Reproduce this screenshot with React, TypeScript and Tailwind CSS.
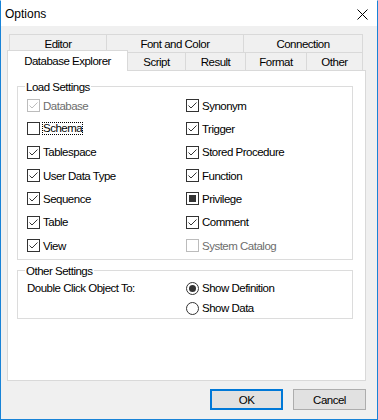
import React from "react";

type CState = "checked" | "unchecked" | "mixed";

function CheckBox({
  label,
  state,
  disabled,
  focus,
}: {
  label: string;
  state: CState;
  disabled?: boolean;
  focus?: boolean;
}) {
  const boxBorder = disabled ? "border-[#bcbcbc]" : "border-[#333333]";
  return (
    <div className="flex items-center">
      <span
        className={`w-[13px] h-[13px] shrink-0 border ${boxBorder} bg-white flex items-center justify-center`}
      >
        {state === "checked" && (
          <svg width="11" height="11" viewBox="0 0 11 11" className="block">
            <polyline
              points="1.5,5.5 4,8 9.5,2.5"
              fill="none"
              stroke={disabled ? "#bcbcbc" : "#333333"}
              strokeWidth="1"
            />
          </svg>
        )}
        {state === "mixed" && <span className="w-[7px] h-[7px] bg-[#333333]" />}
      </span>
      {focus ? (
        <span className="ml-[2px] border border-dotted border-black leading-[11px]">{label}</span>
      ) : (
        <span className={`ml-[3px] leading-[14px] ${disabled ? "text-[#6d6d6d]" : "text-black"}`}>
          {label}
        </span>
      )}
    </div>
  );
}

function Radio({ label, checked }: { label: string; checked?: boolean }) {
  return (
    <div className="flex items-center h-[20px]">
      <span className="w-[13px] h-[13px] shrink-0 rounded-full border border-[#333333] bg-white flex items-center justify-center">
        {checked && <span className="w-[7px] h-[7px] rounded-full bg-[#333333]" />}
      </span>
      <span className="ml-[3px] leading-[14px]">{label}</span>
    </div>
  );
}

export default function App() {
  return (
    <div className="w-[378px] h-[420px] border border-[#1883d7] border-t-white bg-[#f0f0f0] flex flex-col text-black text-[11.5px] tracking-[-0.5px] font-['Liberation_Sans',Arial,sans-serif]">
      {/* Title bar */}
      <div className="h-[25px] shrink-0 bg-white flex items-center justify-between pl-[4px] pr-[9px]">
        <span className="text-[12px] tracking-normal">Options</span>
        <svg width="11" height="11" viewBox="0 0 11 11" className="block mt-[2px]">
          <line x1="0.5" y1="0.5" x2="10.5" y2="10.5" stroke="#000" strokeWidth="1" />
          <line x1="10.5" y1="0.5" x2="0.5" y2="10.5" stroke="#000" strokeWidth="1" />
        </svg>
      </div>

      <div className="pt-[8px] pl-[6px]">
        {/* Tab row 1 */}
        <div className="flex ml-[2px] h-[18px]">
          <div className="w-[97px] h-[18px] border-t border-l border-[#d9d9d9] flex items-center justify-center leading-[14px]">
            Editor
          </div>
          <div className="w-[137px] h-[18px] border-t border-l border-[#d9d9d9] flex items-center justify-center leading-[14px]">
            Font and Color
          </div>
          <div className="w-[120px] h-[18px] border-t border-l border-r border-[#d9d9d9] flex items-center justify-center leading-[14px]">
            Connection
          </div>
        </div>
        {/* Tab row 2 */}
        <div className="flex items-end h-[20px] -mt-[2px] relative">
          <div className="w-[121px] h-[21px] -mb-[1px] bg-white border border-b-0 border-[#d9d9d9] relative z-10 flex items-center justify-center leading-[14px]">
            Database Explorer
          </div>
          <div className="w-[57px] h-[18px] border-t border-[#d9d9d9] flex items-center justify-center leading-[14px]">
            Script
          </div>
          <div className="w-[60px] h-[18px] border-t border-l border-[#d9d9d9] flex items-center justify-center leading-[14px]">
            Result
          </div>
          <div className="w-[61px] h-[18px] border-t border-l border-[#d9d9d9] flex items-center justify-center leading-[14px]">
            Format
          </div>
          <div className="w-[57px] h-[18px] border-t border-l border-r border-[#d9d9d9] flex items-center justify-center leading-[14px]">
            Other
          </div>
        </div>

        {/* Panel */}
        <div className="w-[359px] h-[311px] bg-white border border-[#d9d9d9] flex flex-col">
          {/* Load Settings */}
          <div className="ml-[9px] mt-[15px] w-[336px] border border-[#dcdcdc] flex flex-col pb-[2px]">
            <span className="-mt-[7px] ml-[7px] px-[1px] bg-white self-start leading-[14px]">
              Load Settings
            </span>
            <div className="grid grid-cols-[159px_1fr] auto-rows-[23.33px] items-center pl-[9px]">
              <CheckBox label="Database" state="checked" disabled />
              <CheckBox label="Synonym" state="checked" />
              <CheckBox label="Schema" state="unchecked" focus />
              <CheckBox label="Trigger" state="checked" />
              <CheckBox label="Tablespace" state="checked" />
              <CheckBox label="Stored Procedure" state="checked" />
              <CheckBox label="User Data Type" state="checked" />
              <CheckBox label="Function" state="checked" />
              <CheckBox label="Sequence" state="checked" />
              <CheckBox label="Privilege" state="mixed" />
              <CheckBox label="Table" state="checked" />
              <CheckBox label="Comment" state="checked" />
              <CheckBox label="View" state="checked" />
              <CheckBox label="System Catalog" state="unchecked" disabled />
            </div>
          </div>

          {/* Other Settings */}
          <div className="ml-[9px] mt-[10px] w-[336px] border border-[#dcdcdc] flex flex-col">
            <span className="-mt-[7px] ml-[7px] px-[1px] bg-white self-start leading-[14px]">
              Other Settings
            </span>
            <div className="grid grid-cols-[159px_1fr] pl-[9px]">
              <div className="h-[20px] flex items-center leading-[14px]">Double Click Object To:</div>
              <div className="flex flex-col">
                <Radio label="Show Definition" checked />
                <Radio label="Show Data" />
              </div>
            </div>
          </div>
        </div>
      </div>

      {/* Buttons */}
      <div className="mt-[8px] flex justify-end gap-[10px] pr-[11px]">
        <button className="w-[73px] h-[21px] bg-[#e1e1e1] border-2 border-[#0078d7] flex items-center justify-center leading-[14px]">
          OK
        </button>
        <button className="w-[73px] h-[21px] bg-[#e1e1e1] border border-[#adadad] flex items-center justify-center leading-[14px]">
          Cancel
        </button>
      </div>
    </div>
  );
}
